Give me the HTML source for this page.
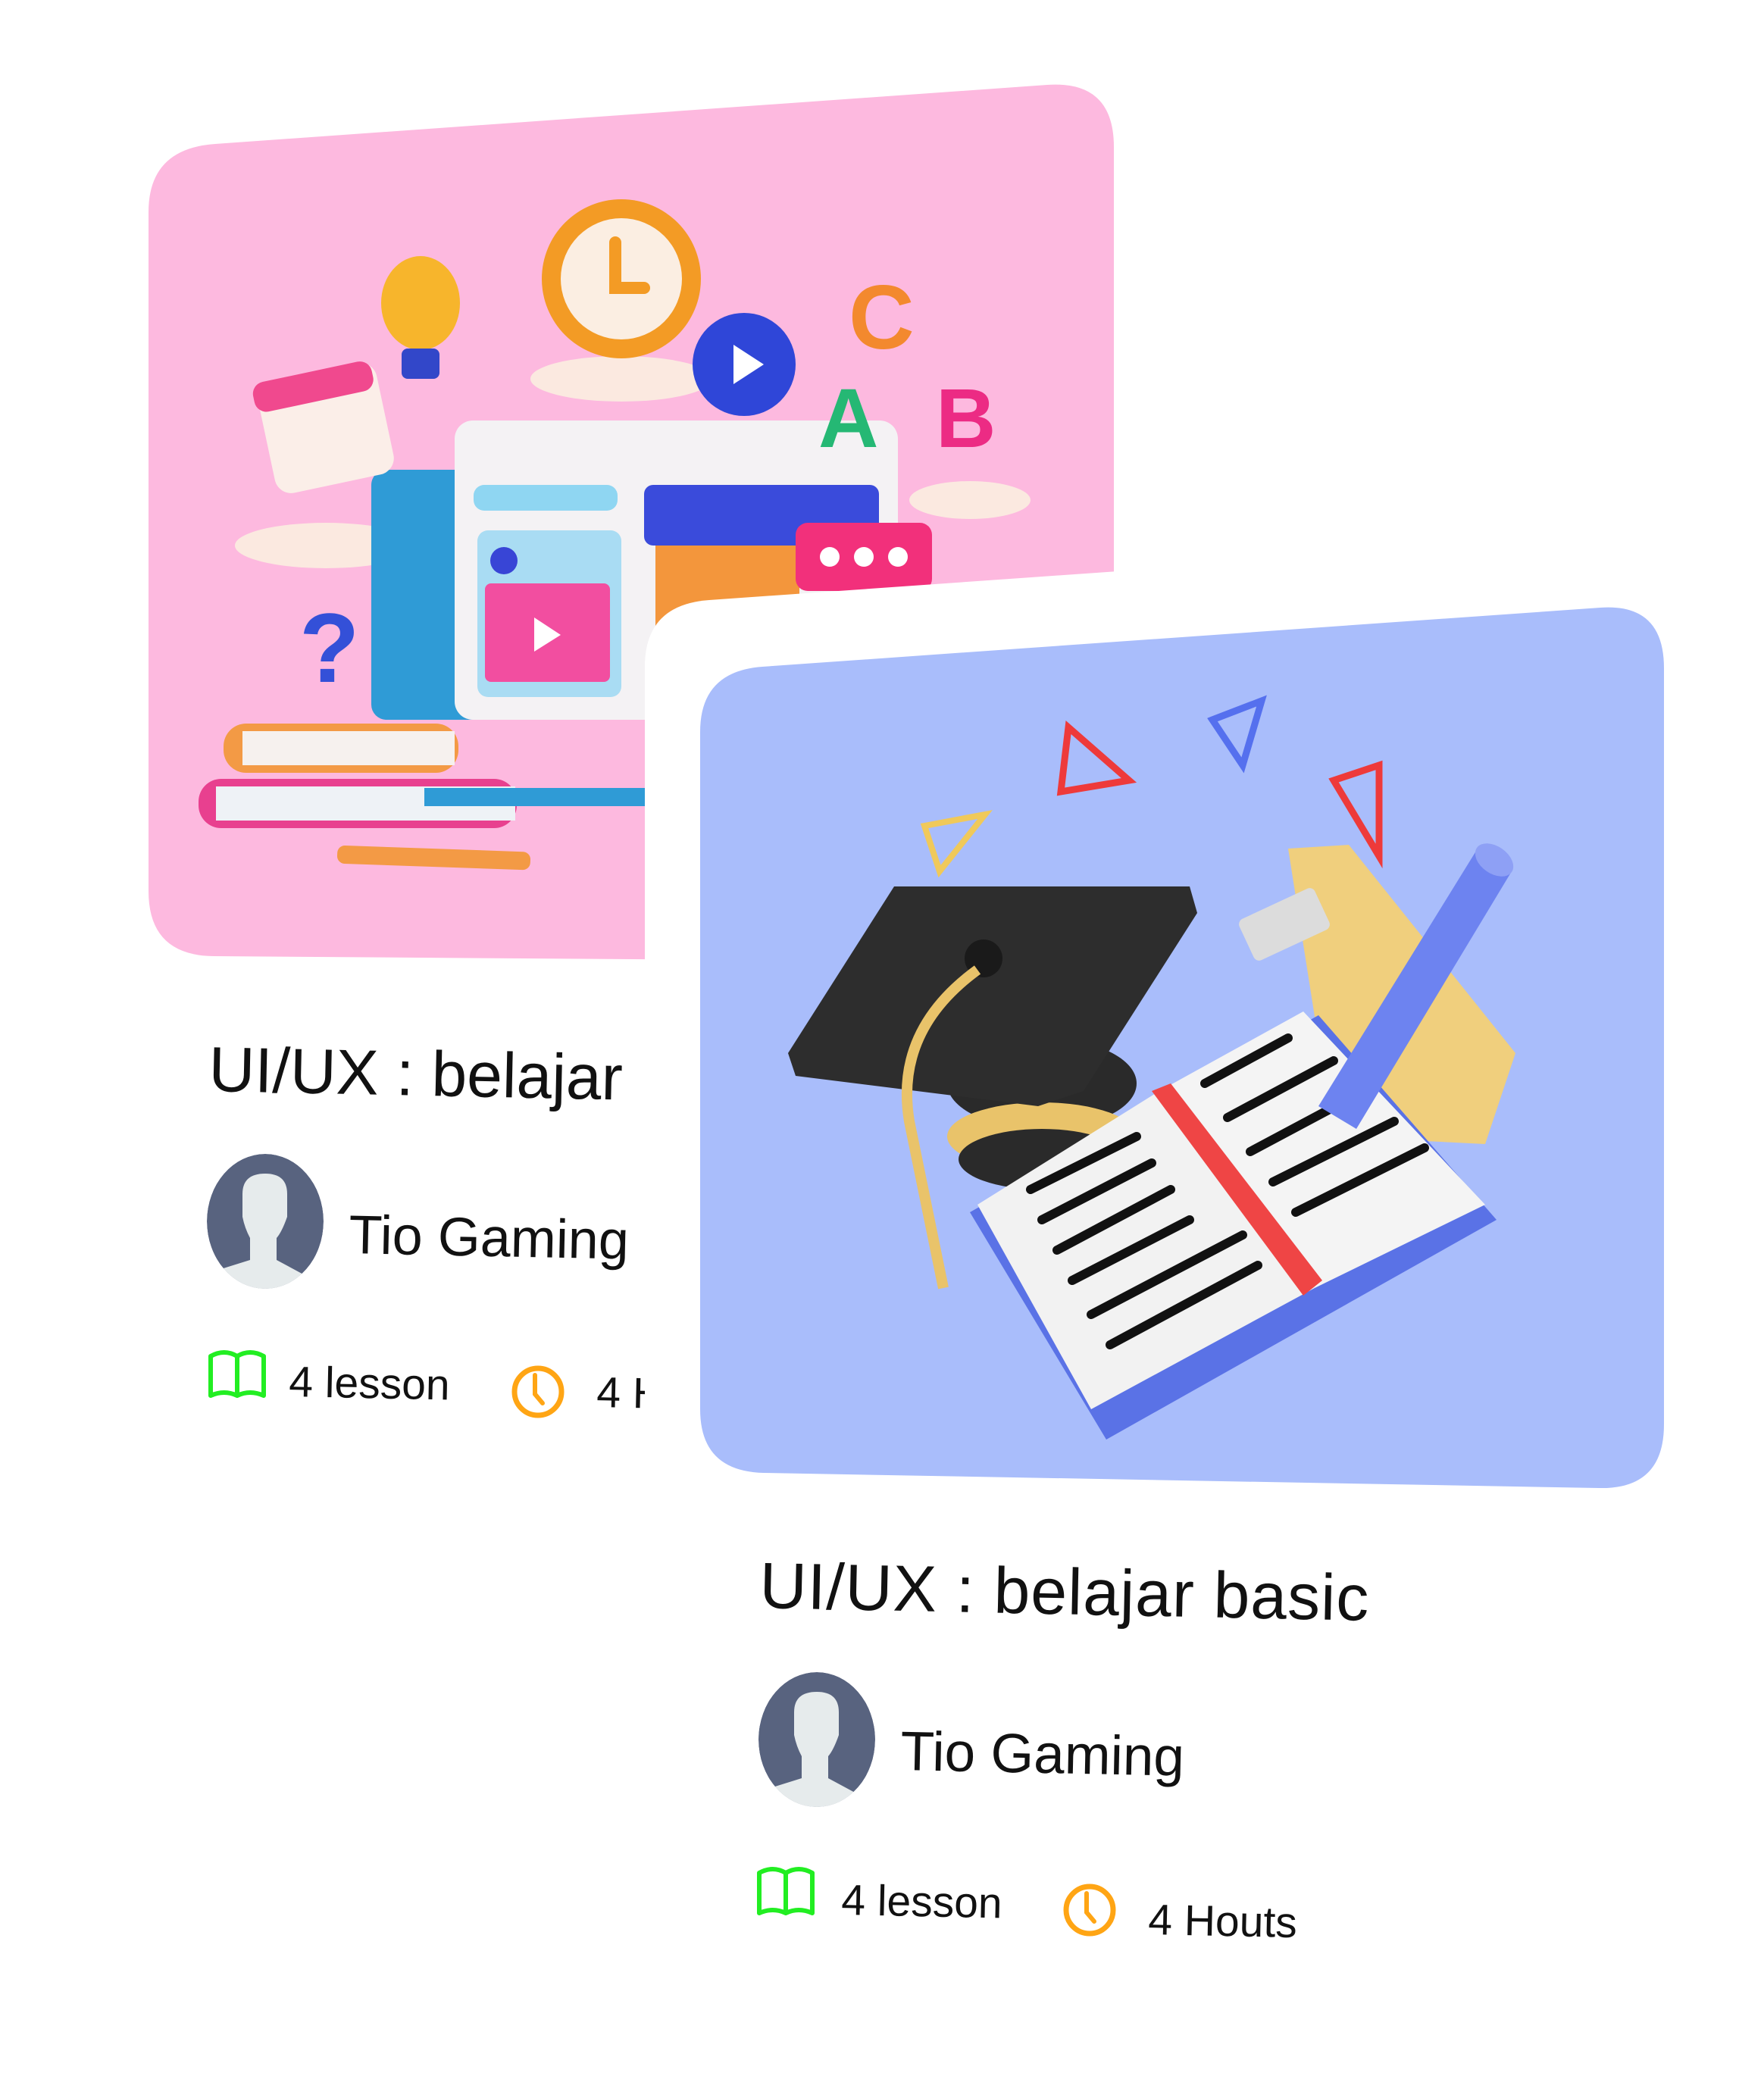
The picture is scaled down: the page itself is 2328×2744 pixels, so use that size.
<!DOCTYPE html>
<html><head><meta charset="utf-8">
<style>
html,body{margin:0;padding:0;background:#fff;}
svg{display:block;}
text{font-family:"Liberation Sans",sans-serif;fill:#111;}
</style></head>
<body>
<svg width="2328" height="2744" viewBox="0 0 2328 2744" xmlns="http://www.w3.org/2000/svg">
<defs>
<clipPath id="avc"><ellipse cx="0" cy="0" rx="77" ry="89"/></clipPath>
<clipPath id="c1"><rect x="0" y="1300" width="851" height="700"/></clipPath>
</defs>

<!-- Pink card -->
<path d="M284,190 L1382,112 Q1470,106 1470,194 L1470,1186 Q1470,1272 1384,1270 L282,1262 Q196,1261 196,1176 L196,280 Q196,196 284,190 Z" fill="#fdb9df"/>
<g>
 <ellipse cx="820" cy="500" rx="120" ry="30" fill="#fbe9e0"/>
 <ellipse cx="430" cy="720" rx="120" ry="30" fill="#fbe9e0"/>
 <ellipse cx="1280" cy="660" rx="80" ry="25" fill="#fbe9e0"/>
 <rect x="490" y="620" width="200" height="330" rx="20" fill="#2f9bd6"/>
 <rect x="600" y="555" width="585" height="395" rx="24" fill="#f4f2f4"/>
 <rect x="625" y="640" width="190" height="34" rx="14" fill="#8fd6f2"/>
 <rect x="630" y="700" width="190" height="220" rx="14" fill="#a9dcf3"/>
 <rect x="640" y="770" width="165" height="130" rx="8" fill="#f24ea0"/>
 <polygon points="705,815 740,838 705,860" fill="#fff"/>
 <circle cx="665" cy="740" r="18" fill="#3845d6"/>
 <rect x="850" y="640" width="310" height="80" rx="12" fill="#3a4bdb"/>
 <rect x="865" y="720" width="190" height="150" fill="#f3963c"/>
 <rect x="1050" y="690" width="180" height="90" rx="16" fill="#f2307b"/>
 <circle cx="1095" cy="735" r="13" fill="#fff"/><circle cx="1140" cy="735" r="13" fill="#fff"/><circle cx="1185" cy="735" r="13" fill="#fff"/>
 <circle cx="820" cy="368" r="105" fill="#f39b25"/>
 <circle cx="820" cy="368" r="80" fill="#fbeee2"/>
 <path d="M812,320 L812,380 L850,380" stroke="#f39b25" stroke-width="16" fill="none" stroke-linecap="round"/>
 <circle cx="982" cy="481" r="68" fill="#2f46d8"/>
 <polygon points="968,455 1008,481 968,507" fill="#fff"/>
 <ellipse cx="555" cy="400" rx="52" ry="62" fill="#f7b52c"/>
 <rect x="530" y="460" width="50" height="40" rx="8" fill="#3247c9"/>
 <rect x="350" y="490" width="160" height="150" rx="22" fill="#fbeee8" transform="rotate(-12 430 565)"/>
 <rect x="345" y="488" width="160" height="40" rx="16" fill="#f0498e" transform="rotate(-12 430 565)"/>
 <text x="1120" y="460" font-size="120" font-weight="bold" style="fill:#f3892e">C</text>
 <text x="1080" y="590" font-size="110" font-weight="bold" style="fill:#25b874">A</text>
 <text x="1235" y="590" font-size="110" font-weight="bold" style="fill:#ec2b84">B</text>
 <text x="395" y="900" font-size="130" font-weight="bold" style="fill:#3450d8">?</text>
 <rect x="295" y="955" width="310" height="65" rx="30" fill="#f39a45"/>
 <rect x="320" y="965" width="280" height="45" fill="#f6f1ee"/>
 <rect x="262" y="1028" width="420" height="65" rx="30" fill="#e8408f"/>
 <rect x="285" y="1038" width="395" height="45" fill="#eef2f6"/>
 <rect x="560" y="1040" width="300" height="24" fill="#2f9bd6"/>
 <rect x="445" y="1120" width="255" height="24" rx="10" fill="#f39a45" transform="rotate(2 570 1132)"/>
</g>

<!-- White backing card -->
<path d="M936,792 L2240,700 L2328,700 L2328,2050 L851,2050 L851,880 Q851,798 936,792 Z" fill="#fff"/>

<!-- Blue card -->
<path d="M1006,880 L2112,802 Q2196,796 2196,882 L2196,1880 Q2196,1966 2110,1964 L1008,1944 Q924,1942 924,1860 L924,966 Q924,886 1006,880 Z" fill="#a9bdfb"/>
<g>
 <path d="M1220,1090 L1300,1075 L1240,1150 Z" fill="none" stroke="#f0c95a" stroke-width="8"/>
 <path d="M1410,960 L1490,1030 L1400,1045 Z" fill="none" stroke="#ee3a3a" stroke-width="9"/>
 <path d="M1600,950 L1665,925 L1640,1010 Z" fill="none" stroke="#5570ee" stroke-width="9"/>
 <path d="M1760,1030 L1820,1010 L1820,1130 Z" fill="none" stroke="#ee3a3a" stroke-width="9"/>
 <polygon points="1700,1120 1780,1115 2000,1390 1960,1510 1760,1500" fill="#f0cf7d"/>
 <rect x="1640" y="1190" width="110" height="60" rx="8" fill="#dcdcdc" transform="rotate(-25 1695 1220)"/>
 <ellipse cx="1375" cy="1430" rx="125" ry="60" fill="#2a2a2a"/>
 <ellipse cx="1375" cy="1500" rx="125" ry="45" fill="#e9c36a"/>
 <ellipse cx="1375" cy="1530" rx="110" ry="40" fill="#2a2a2a"/>
 <polygon points="1180,1170 1570,1170 1580,1205 1430,1440 1370,1460 1050,1420 1040,1390" fill="#2d2d2d"/>
 <circle cx="1298" cy="1265" r="25" fill="#1a1a1a"/>
 <path d="M1290,1280 Q1180,1360 1200,1480 L1245,1700" stroke="#e9c36a" stroke-width="14" fill="none"/>
 <polygon points="1280,1600 1740,1340 1975,1610 1460,1900" fill="#5a72e6"/>
 <polygon points="1290,1590 1530,1440 1735,1700 1440,1860" fill="#f2f2f2"/>
 <polygon points="1530,1440 1720,1335 1960,1590 1735,1700" fill="#f4f4f4"/>
 <polygon points="1520,1440 1545,1430 1745,1690 1720,1710" fill="#ef4545"/>
 <g stroke="#111" stroke-width="12" stroke-linecap="round">
  <line x1="1360" y1="1570" x2="1500" y2="1500"/><line x1="1375" y1="1610" x2="1520" y2="1535"/>
  <line x1="1395" y1="1650" x2="1545" y2="1570"/><line x1="1415" y1="1690" x2="1570" y2="1610"/>
  <line x1="1440" y1="1735" x2="1640" y2="1630"/><line x1="1465" y1="1775" x2="1660" y2="1670"/>
  <line x1="1590" y1="1430" x2="1700" y2="1370"/><line x1="1620" y1="1475" x2="1760" y2="1400"/>
  <line x1="1650" y1="1520" x2="1800" y2="1440"/><line x1="1680" y1="1560" x2="1840" y2="1480"/>
  <line x1="1710" y1="1600" x2="1880" y2="1515"/>
 </g>
 <polygon points="1740,1460 1950,1120 1995,1150 1790,1490" fill="#6d83f0"/>
 <ellipse cx="1972" cy="1135" rx="28" ry="18" fill="#8ea0f5" transform="rotate(35 1972 1135)"/>
</g>

<!-- Card 1 text (clipped) -->
<g clip-path="url(#c1)">
<g transform="rotate(1.2 275 1440)">
 <text x="275" y="1440" font-size="84">UI/UX : belajar</text>
</g>
<g transform="translate(350,1612)">
 <g clip-path="url(#avc)">
  <ellipse cx="0" cy="0" rx="77" ry="89" fill="#58637f"/>
  <path d="M-30,-36 Q-30,-63 0,-63 Q29,-63 29,-36 L29,-6 Q22,14 15,22 L15,51 L54,72 L90,110 L-90,110 L-68,66 L-20,51 L-20,22 Q-27,9 -30,-6 Z" fill="#e6ebec"/>
 </g>
</g>
<g transform="rotate(1.2 460 1654)">
 <text x="460" y="1654" font-size="72">Tio Gaming</text>
</g>
<path d="M278,1790 Q296,1780 313,1790 Q330,1780 348,1790 L348,1842 Q330,1834 313,1842 Q296,1834 278,1842 Z M313,1790 L313,1842" fill="none" stroke="#22ee22" stroke-width="6" stroke-linejoin="round"/>
<g transform="rotate(1.2 381 1843)">
 <text x="381" y="1843" font-size="57">4 lesson</text>
</g>
<circle cx="710" cy="1837" r="31" fill="none" stroke="#ffa514" stroke-width="7"/>
<path d="M706,1815 L706,1840 L716,1852" fill="none" stroke="#ffa514" stroke-width="6" stroke-linecap="round"/>
<g transform="rotate(1.2 787 1857)">
 <text x="787" y="1857" font-size="57">4 Houts</text>
</g>
</g>

<!-- Card 2 text -->
<g transform="rotate(1.2 1002 2122)">
 <text x="1002" y="2122" font-size="86" letter-spacing="1">UI/UX : belajar basic</text>
</g>
<g transform="translate(1078,2296)">
 <g clip-path="url(#avc)">
  <ellipse cx="0" cy="0" rx="77" ry="89" fill="#58637f"/>
  <path d="M-30,-36 Q-30,-63 0,-63 Q29,-63 29,-36 L29,-6 Q22,14 15,22 L15,51 L54,72 L90,110 L-90,110 L-68,66 L-20,51 L-20,22 Q-27,9 -30,-6 Z" fill="#e6ebec"/>
 </g>
</g>
<g transform="rotate(1.2 1188 2336)">
 <text x="1188" y="2336" font-size="73">Tio Gaming</text>
</g>
<path d="M1002,2472 Q1020,2462 1037,2472 Q1054,2462 1072,2472 L1072,2525 Q1054,2517 1037,2525 Q1020,2517 1002,2525 Z M1037,2472 L1037,2525" fill="none" stroke="#22ee22" stroke-width="6" stroke-linejoin="round"/>
<g transform="rotate(1.2 1110 2527)">
 <text x="1110" y="2527" font-size="57">4 lesson</text>
</g>
<circle cx="1438" cy="2521" r="31" fill="none" stroke="#ffa514" stroke-width="7"/>
<path d="M1434,2499 L1434,2524 L1444,2536" fill="none" stroke="#ffa514" stroke-width="6" stroke-linecap="round"/>
<g transform="rotate(1.2 1515 2553)">
 <text x="1515" y="2553" font-size="57">4 Houts</text>
</g>
</svg>
</body></html>
